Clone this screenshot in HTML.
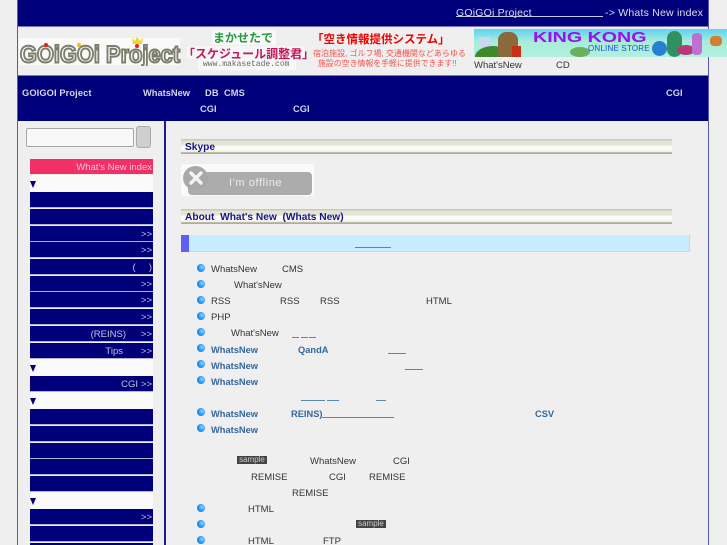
<!DOCTYPE html>
<html><head><meta charset="utf-8"><style>
html,body{margin:0;padding:0;width:727px;height:545px;overflow:hidden;background:#efefef}
body{position:relative;font-family:"Liberation Sans","Noto Sans CJK JP",sans-serif;font-size:9.5px;color:#333}
.a,.t,.b,.l,.n{position:absolute}
.t{white-space:pre;line-height:12px}
.w{color:#d4d4e6;font-weight:bold;font-size:9.3px}
.b{color:#34679a;font-weight:bold;font-size:9.3px}
.n{left:30px;width:123px;height:15px;background:#00007b;border-bottom:1px solid #b4b4cc;color:#c4c4dc;line-height:18px;font-size:9.5px;white-space:pre}
.n span{position:absolute;top:0}
.wb{position:absolute;left:30px;width:123px;height:17px;background:#fafafa}
.wb i{position:absolute;left:0;top:6px;width:0;height:0;border-left:3.5px solid transparent;border-right:3.5px solid transparent;border-top:7px solid #00007b}
.h{position:absolute;left:181px;width:491px;height:15px;background:linear-gradient(#c9c9b4 0,#c9c9b4 1px,#e4e4d6 2px,#e4e4d6 6px,#fbfbf6 7px,#fbfbf6 11px,#efefe6 12px,#efefe6 13px,#aeae98 13.5px,#aeae98 15px);color:#14148a;font-weight:bold;font-size:10.2px;line-height:17px;text-indent:4px;white-space:pre}
.l{left:197px;width:8px;height:8px;border-radius:50%;background:radial-gradient(circle at 65% 40%,#8fdcff 0,#2a94ee 50%,#0f6cc8 100%)}
.u{position:absolute;height:1px;background:#5b86b0}
.s{position:absolute;width:30px;height:8px;background:#444;color:#ccc;font-size:8px;line-height:8px;text-align:center}
</style></head><body>
<div class="a" style="left:17px;top:0;width:1px;height:545px;background:#5a5ab4"></div>
<div class="a" style="left:708px;top:0;width:1px;height:545px;background:#5a5ab4"></div>
<div class="a" style="left:18px;top:0;width:690px;height:26px;background:#00007b"></div>
<div class="a" style="left:18px;top:26px;width:690px;height:1px;background:#7777bb"></div>
<div class="a" style="left:18px;top:75px;width:690px;height:46px;background:#00007b;border-top:1px solid #7777bb;box-sizing:border-box"></div>
<div class="a" style="left:164px;top:121px;width:2px;height:424px;background:#1a1a96"></div>

<div class="t" style="left:456px;top:7px;color:#dedeee;font-size:10.5px;letter-spacing:.2px">GOiGOi Project</div>
<div class="a" style="left:456px;top:16px;width:147px;height:1px;background:#c8c8e0"></div>
<div class="t" style="left:605px;top:7px;color:#dedeee;font-size:10.5px;letter-spacing:.22px">-&gt; Whats New index</div>

<!-- logo -->
<div class="a" style="left:19px;top:38px;width:161px;height:27px;background:#fafafa"></div>
<svg class="a" style="left:19px;top:34px" width="162" height="32" viewBox="0 0 162 32">
<text x="1" y="28.5" font-family="Liberation Sans" font-weight="bold" font-size="24" fill="#fafafa" stroke="#7d7d6c" stroke-width="2" textLength="160" lengthAdjust="spacingAndGlyphs">GOiGOi Project</text>
<circle cx="27" cy="11" r="2" fill="#e8201c"/><circle cx="60" cy="11" r="2" fill="#e8c020"/><circle cx="118" cy="12" r="2" fill="#e8201c"/>
<path d="M113 4l3 3 2-4 3 4 3-3-1 6h-9z" fill="#f0d820"/></svg>

<!-- banner 1 -->
<div class="a" style="left:212px;top:30px;width:64px;height:15px;background:#f8f8f8"></div>
<div class="a" style="left:187px;top:46px;width:117px;height:13px;background:#f6f6f6"></div>
<div class="a" style="left:198px;top:58px;width:98px;height:12px;background:#f8f8f8"></div>
<div class="t" style="left:213px;top:31px;font-size:12px;font-weight:bold;color:#259a3c;line-height:15px">まかせたで</div>
<div class="t" style="left:183px;top:46px;font-size:12px;font-weight:bold;color:#c01a5c;line-height:16px">「スケジュール調整君」</div>
<div class="t" style="left:203px;top:60px;font-family:'Liberation Mono',monospace;font-size:8px;color:#666;line-height:10px">www.makasetade.com</div>
<div class="t" style="left:312px;top:33px;font-size:11.5px;font-weight:bold;color:#f00000;line-height:15px">「空き情報提供システム」</div>
<div class="t" style="left:313px;top:49px;font-size:8px;color:#f45050;line-height:10px">宿泊施設, ゴルフ場, 交通機関などあらゆる</div>
<div class="t" style="left:318px;top:59px;font-size:7.9px;color:#f45050;line-height:10px">施設の空き情報を手軽に提供できます!!</div>

<!-- banner 2 -->
<div class="a" style="left:474px;top:29px;width:253px;height:28px;background:linear-gradient(#5fd2f4,#a8ecd8 45%,#b0f0e0);overflow:hidden">
<div class="a" style="left:5px;top:8px;width:12px;height:10px;background:#c8d8f0"></div>
<div class="a" style="left:1px;top:17px;width:36px;height:22px;border-radius:50%;background:#3c8a2c"></div>
<div class="a" style="left:24px;top:3px;width:20px;height:25px;border-radius:8px 8px 3px 3px;background:#8a6a3a"></div>
<div class="a" style="left:38px;top:17px;width:9px;height:11px;background:#c83018"></div>
<div class="a" style="left:96px;top:18px;width:20px;height:10px;border-radius:50%;background:#6ab060"></div>
<div class="t" style="left:59px;top:1px;font-size:15px;line-height:15px;font-weight:bold;color:#9a10ee;transform:scaleX(1.31);transform-origin:0 0">KING KONG</div>
<div class="t" style="left:114px;top:15px;font-size:8px;line-height:9px;color:#1a50d0;letter-spacing:.2px">ONLINE STORE</div>
<div class="a" style="left:178px;top:12px;width:15px;height:15px;border-radius:50%;background:#2a80d0"></div>
<div class="a" style="left:193px;top:2px;width:15px;height:26px;border-radius:9px;background:#309060"></div>
<div class="a" style="left:203px;top:16px;width:18px;height:10px;background:#b83878;border-radius:50%"></div>
<div class="a" style="left:218px;top:4px;width:10px;height:22px;background:#c070d0;border-radius:4px"></div>
<div class="a" style="left:236px;top:7px;width:12px;height:10px;background:#d08030;border-radius:4px"></div>
</div>
<div class="t" style="left:474px;top:60px">What'sNew</div>
<div class="t" style="left:556px;top:60px">CD</div>

<!-- nav -->
<div class="t w" style="left:22px;top:87px;letter-spacing:.1px">GOIGOI Project</div>
<div class="t w" style="left:143px;top:87px">WhatsNew</div>
<div class="t w" style="left:205px;top:87px;letter-spacing:.1px">DB  CMS</div>
<div class="t w" style="left:666px;top:87px">CGI</div>
<div class="t w" style="left:200px;top:103px">CGI</div>
<div class="t w" style="left:293px;top:103px">CGI</div>

<!-- search -->
<div class="a" style="left:26px;top:128px;width:106px;height:17px;background:#f8f8f8;border:1px solid #a8a8a8;border-radius:2px"></div>
<div class="a" style="left:136px;top:126px;width:13px;height:20px;background:#cfcfd2;border:1px solid #aaa;border-radius:3px"></div>

<!-- menu -->
<div class="a" style="left:30px;top:159px;width:122px;padding-right:1px;height:15px;background:#f23068;color:#f8c4d4;text-align:right;line-height:17px;font-size:9.5px;white-space:pre">What's New index</div>
<div class="wb" style="top:175px"><i></i></div>
<div class="n" style="top:192px"></div>
<div class="n" style="top:209px"></div>
<div class="n" style="top:226px"><span style="right:1px">&gt;&gt;</span></div>
<div class="n" style="top:242px"><span style="right:1px">&gt;&gt;</span></div>
<div class="n" style="top:259px"><span style="right:1px">(     )</span></div>
<div class="n" style="top:276px"><span style="right:1px">&gt;&gt;</span></div>
<div class="n" style="top:292px"><span style="right:1px">&gt;&gt;</span></div>
<div class="n" style="top:309px"><span style="right:1px">&gt;&gt;</span></div>
<div class="n" style="top:326px"><span style="right:27px">(REINS)</span><span style="right:1px">&gt;&gt;</span></div>
<div class="n" style="top:343px"><span style="right:30px">Tips</span><span style="right:1px">&gt;&gt;</span></div>
<div class="wb" style="top:359px"><i></i></div>
<div class="n" style="top:376px"><span style="right:15px">CGI</span><span style="right:1px">&gt;&gt;</span></div>
<div class="wb" style="top:392px"><i></i></div>
<div class="n" style="top:409px"></div>
<div class="n" style="top:426px"></div>
<div class="n" style="top:443px"></div>
<div class="n" style="top:459px"></div>
<div class="n" style="top:476px"></div>
<div class="wb" style="top:492px"><i></i></div>
<div class="n" style="top:509px"><span style="right:1px">&gt;&gt;</span></div>
<div class="n" style="top:526px"></div>
<div class="n" style="top:543px"></div>

<!-- content -->
<div class="h" style="top:139px">Skype</div>
<div class="a" style="left:181px;top:164px;width:133px;height:32px;background:#fafafa"></div>
<div class="a" style="left:188px;top:172px;width:124px;height:23px;background:#acacac;border-radius:4px"></div>
<div class="a" style="left:183px;top:166px;width:25px;height:24px;border-radius:50%;background:#a8a8a8"></div>
<svg class="a" style="left:188px;top:170px" width="16" height="16"><path d="M3 3L13 13M13 3L3 13" stroke="#f4f4f4" stroke-width="3.4" stroke-linecap="round"/></svg>
<div class="t" style="left:229px;top:177px;color:#ececec;font-size:11px;letter-spacing:.6px">I'm offline</div>
<div class="h" style="top:209px">About  What's New  (Whats New)</div>
<div class="a" style="left:181px;top:235px;width:508px;height:16px;background:#c8ecff;border-bottom:1px solid #c8d8e0;border-right:1px solid #c8d8e0"></div>
<div class="a" style="left:181px;top:235px;width:8px;height:17px;background:#6060f8"></div>
<div class="u" style="left:355px;top:247px;width:36px"></div>

<div class="l" style="top:264px"></div><div class="t" style="left:211px;top:264px">WhatsNew</div><div class="t" style="left:282px;top:264px">CMS</div>
<div class="l" style="top:280px"></div><div class="t" style="left:234px;top:280px">What'sNew</div>
<div class="l" style="top:296px"></div><div class="t" style="left:211px;top:296px">RSS</div><div class="t" style="left:280px;top:296px">RSS</div><div class="t" style="left:320px;top:296px">RSS</div><div class="t" style="left:426px;top:296px">HTML</div>
<div class="l" style="top:312px"></div><div class="t" style="left:211px;top:312px">PHP</div>
<div class="l" style="top:328px"></div><div class="t" style="left:231px;top:328px">What'sNew</div>
<div class="u" style="left:292px;top:337px;width:7px"></div><div class="u" style="left:301px;top:337px;width:7px"></div><div class="u" style="left:309px;top:337px;width:7px"></div>
<div class="l" style="top:344px"></div><div class="t b" style="left:211px;top:344px">WhatsNew</div><div class="t b" style="left:298px;top:344px">QandA</div><div class="u" style="left:388px;top:353px;width:18px"></div>
<div class="l" style="top:360px"></div><div class="t b" style="left:211px;top:360px">WhatsNew</div><div class="u" style="left:405px;top:369px;width:18px"></div>
<div class="l" style="top:376px"></div><div class="t b" style="left:211px;top:376px">WhatsNew</div>
<div class="u" style="left:301px;top:400px;width:24px"></div><div class="u" style="left:327px;top:400px;width:12px"></div><div class="u" style="left:376px;top:400px;width:10px"></div>
<div class="l" style="top:408px"></div><div class="t b" style="left:211px;top:408px">WhatsNew</div><div class="t b" style="left:291px;top:408px">REINS)</div><div class="u" style="left:322px;top:417px;width:72px"></div><div class="t b" style="left:535px;top:408px">CSV</div>
<div class="l" style="top:424px"></div><div class="t b" style="left:211px;top:424px">WhatsNew</div>

<div class="s" style="left:237px;top:456px">sample</div><div class="t" style="left:310px;top:456px">WhatsNew</div><div class="t" style="left:393px;top:456px">CGI</div>
<div class="t" style="left:251px;top:472px">REMISE</div><div class="t" style="left:329px;top:472px">CGI</div><div class="t" style="left:369px;top:472px">REMISE</div>
<div class="t" style="left:292px;top:488px">REMISE</div>
<div class="l" style="top:504px"></div><div class="t" style="left:248px;top:504px">HTML</div>
<div class="l" style="top:520px"></div><div class="s" style="left:356px;top:520px">sample</div>
<div class="l" style="top:536px"></div><div class="t" style="left:248px;top:536px">HTML</div><div class="t" style="left:323px;top:536px">FTP</div>
</body></html>
